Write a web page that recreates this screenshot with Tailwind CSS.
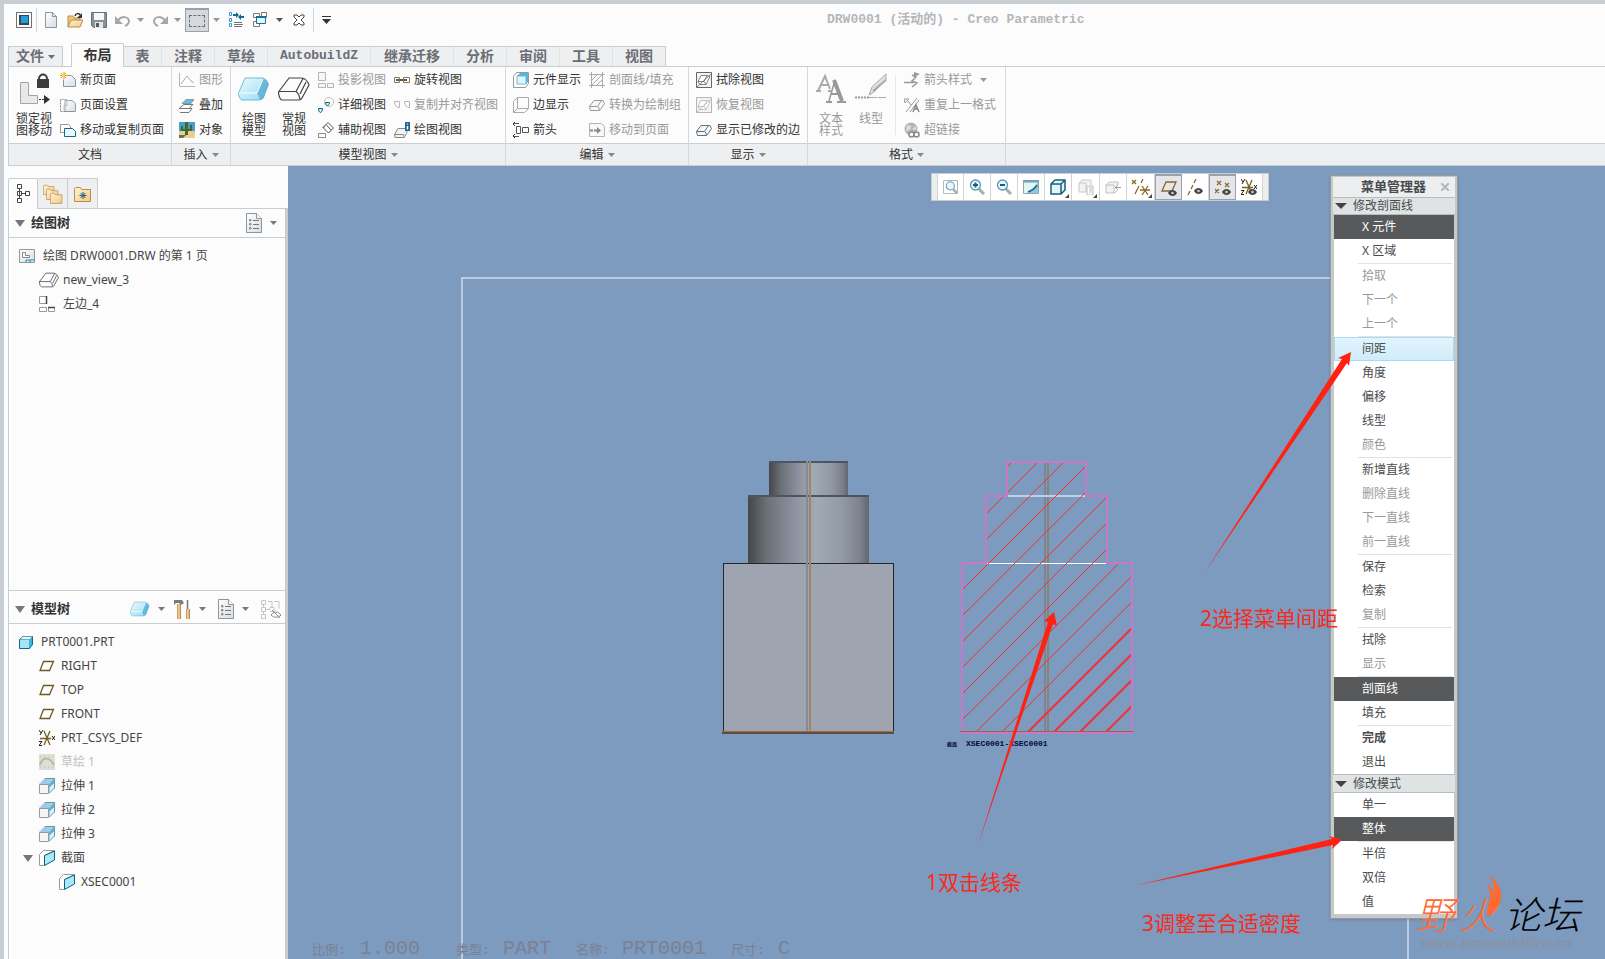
<!doctype html>
<html lang="zh-CN">

<head>
    <meta charset="UTF-8" />
    <meta name="viewport" content="width=device-width, initial-scale=1.0" />
    <title>DRW0001 (活动的) - Creo Parametric</title>
    <script src="https://cdn.jsdelivr.net/npm/@tailwindcss/browser@4"></script>
</head>

<body class="bg-[#fcfcfc] text-xs text-[#333] font-['Noto_Sans','Noto_Sans_CJK_SC',sans-serif]">

    <!-- icon library -->
    <svg class="absolute size-0">
        <defs>
            <linearGradient id="ice" x1="0" y1="0" x2="1" y2="1">
                <stop offset="0" stop-color="#effbfe" />
                <stop offset="1" stop-color="#8fdcf4" />
            </linearGradient>
            <linearGradient id="paper" x1="0" y1="0" x2="1" y2="1">
                <stop offset="0" stop-color="#fff" />
                <stop offset="1" stop-color="#d5dde4" />
            </linearGradient>
            <linearGradient id="gold" x1="0" y1="0" x2="1" y2="1">
                <stop offset="0" stop-color="#fff3d6" />
                <stop offset="1" stop-color="#f2c987" />
            </linearGradient>
            <linearGradient id="wood">
                <stop offset="0" stop-color="#c08a45" />
                <stop offset=".5" stop-color="#f7dcaa" />
                <stop offset="1" stop-color="#a87333" />
            </linearGradient>
            <linearGradient id="steel">
                <stop offset="0" stop-color="#44474b" />
                <stop offset=".15" stop-color="#6a7076" />
                <stop offset=".38" stop-color="#8d92a0" />
                <stop offset=".56" stop-color="#a0abb4" />
                <stop offset=".78" stop-color="#939aa5" />
                <stop offset=".93" stop-color="#7b808a" />
                <stop offset="1" stop-color="#62666d" />
            </linearGradient>
        </defs>
        <symbol id="caret" viewBox="0 0 7 4"><path d="M0 0h7L3.500 4z" fill="currentColor" /></symbol>
        <symbol id="page" viewBox="0 0 16 16"><path d="M2.500.5h7l4 4v11h-11z" fill="url(#paper)" stroke="#8e959b" /><path d="M9.500.5v4h4" fill="none" stroke="#8e959b" /></symbol>
        <symbol id="open" viewBox="0 0 16 16"><path d="M1 15V4h5l1 2h6v3" fill="#f0c680" stroke="#b98d45" /><path d="M1 15l3-7h12l-3 7z" fill="url(#gold)" stroke="#b98d45" /><path d="M8 4c1-3 4-3 5-1" fill="none" stroke="#333" stroke-width="1.500" /><path d="M15 1v5h-5z" fill="#333" /></symbol>
        <symbol id="save" viewBox="0 0 16 16"><path d="M.5.5h15v15h-13l-2-2z" fill="#8b9095" stroke="#6a7075" /><path d="M3 1h10v7H3z" fill="#f5f8fa" /><path d="M4 10h8v6H4z" fill="#e3e7ea" /><path d="M5 11h3v4H5z" fill="#555b60" /></symbol>
        <symbol id="undo" viewBox="0 0 16 16"><path d="M3 8c4-4 10-4 11 1 0 3-2 4-4 5" fill="none" stroke="#a3a7aa" stroke-width="2" /><path d="M0 4v8h8z" fill="#a3a7aa" /></symbol>
        <symbol id="tree" viewBox="0 0 16 20"><path d="M4.500 5v10M6 9.500h4M2.500.5h4v4h-4zM2.500 7.500h4v4h-4zM2.500 14.500h4v4h-4zM10.500 7.500h4v4h-4z" fill="#fff" stroke="#444" /></symbol>
        <symbol id="regen" viewBox="0 0 16 16"><path d="M1.500.5h2v3h-2zM1.500 6.500h2v3h-2zM1.500 11.500h2v3h-2z" fill="#fff" stroke="#2a9ad0" /><path d="M6 10.500h8M6 12.500h9M6 14.500h8" stroke="#70767a" /><path d="M6 4v-1h4M15 4v1h-4" fill="none" stroke="#136a8f" stroke-width="2" /><path d="M8 0l3 3-3 3zM13 2l-3 3 3 3z" fill="#136a8f" /></symbol>
        <symbol id="windows" viewBox="0 0 16 16"><path d="M1.500 1.500h6v4h-6zM1.500 9.500h6v5h-6zM9.500.5h5v5h-5z" fill="#fff" stroke="#777" /><path d="M4.500 4.500h9v7h-9z" fill="#e6f5fb" stroke="#167294" /><path d="M4 5h10" stroke="#167294" stroke-width="2" /></symbol>
        <symbol id="newpage" viewBox="0 0 16 16"><path d="M5.500 3.500h6l4 4v7h-12v-7" fill="url(#paper)" stroke="#8e959b" /><path d="M4 0v7M0 3.500h8M1 1l5 5M6 1L1 6" stroke="#f29a1f" /><circle cx="3.500" cy="3.500" r="1.500" fill="#ffd65a" /></symbol>
        <symbol id="setup" viewBox="0 0 16 16"><path d="M5 3.500h7l3.500 3v8H5z" fill="url(#paper)" stroke="#9aa0a5" /><path d="M.5 2.500v12h15" fill="none" stroke="#888" stroke-dasharray="2 1" /><path d="M1 2.500h6v6H4v5" fill="none" stroke="#b9bec2" /></symbol>
        <symbol id="copypage" viewBox="0 0 16 16"><path d="M.5 2.500h8l2 2v6H.5z" fill="#fff" stroke="#999" /><path d="M4.500 6.500h8l3 3v5h-11z" fill="#eaf7fc" stroke="#14678a" /></symbol>
        <symbol id="graph" viewBox="0 0 16 16"><path d="M.5 1v13.500H16" fill="none" stroke="#b5b8ba" /><path d="M2 12l6-8 4 5 3 2" fill="none" stroke="#aaa" /></symbol>
        <symbol id="overlay" viewBox="0 0 16 16"><path d="M1 15.500h9l3-4H5M0 11.500h10l4-4H5z" fill="#fff" stroke="#777" /><path d="M3 6.500h9l3-4H7z" fill="#5fc1e8" stroke="#8a9aa0" /></symbol>
        <symbol id="object" viewBox="0 0 16 16"><path d="M0 0h16v16H0z" fill="#4b9ccc" /><path d="M0 9h16v7H0z" fill="#ebcd92" /><path d="M6 0h3v13H6zM2 4h2v3h4v2H2zM11 3h2v6H8V7h3z" fill="#3c6b30" /><path d="M0 13h7l-3 3H0z" fill="#6d6d46" /></symbol>
        <symbol id="slab" viewBox="0 0 32 24"><path d="M7 1h18q3 1 5 5l-5 15q-2 2-4 2H4q-3-1-3.500-7z" fill="url(#ice)" stroke="#74bad4" /><path d="M25 1.500q4 1 6 6l-5 13q-2 2-4 2.500-1-4-3-7z" fill="#59acd0" opacity=".8" /><path d="M1 16h18l6-14" fill="none" stroke="#fff" /></symbol>
        <symbol id="wire" viewBox="0 0 32 24"><path d="M11 1h13q5 1 7 7l-7 13q-1 2-3 2H4q-3-1-3.500-8zM.5 14.500H18q3 2 4 8M18 14.500L25 1.500M22 17L28 5" fill="none" stroke="#444" stroke-width="1.200" /></symbol>
        <symbol id="proj" viewBox="0 0 16 16"><path d="M.5.500h7v8h-7zM.5 11.500h7v4h-7zM9.500 11.500h6v4h-6z" fill="#f7f7f7" stroke="#b5b5b5" /></symbol>
        <symbol id="projdark" viewBox="0 0 16 16"><path d="M.5.500h7v7h-7zM.5 11.500h7v4h-7zM9.500 11.500h6v4h-6z" fill="#fff" stroke="#999" /><path d="M7.500 0v8M9 11.500h7" stroke="#444" stroke-width="1.500" /></symbol>
        <symbol id="detail" viewBox="0 0 16 16"><circle cx="11" cy="5" r="4.500" fill="#fff" stroke="#bbb" /><path d="M7.500 5.500h4c0 2-1 3-2 3s-2-1-2-3zM.5 11.500h4c0 2-1 4-2 4s-2-2-2-4z" fill="#d5f0fa" stroke="#14607f" /></symbol>
        <symbol id="aux" viewBox="0 0 16 16"><path d="M10 .5l5.500 5.500-5 5L5 5.500zM8 2.500l5 5.500M5 5.500l2-1" fill="#fff" stroke="#555" /><path d="M.5 11.500h7v4h-7z" fill="#fff" stroke="#888" /></symbol>
        <symbol id="revolved" viewBox="0 0 16 16"><path d="M.5 5.500h5v5h-5zM9.500 5.500h6v5h-6z" fill="#fff" stroke="#777" /><path d="M2 8h12" stroke="#6f5620" stroke-width="2" stroke-dasharray="3 1" /></symbol>
        <symbol id="align" viewBox="0 0 16 16"><path d="M.5 4.500h5v6c-3 0-5-2-5-6zM10.500 4.500h5v6c-3 0-5-2-5-6z" fill="#fff" stroke="#b5b5b5" /></symbol>
        <symbol id="info" viewBox="0 0 16 16"><path d="M4 6.500h8l1 4-3 5H1l-.5-3zM.5 12.500h9l1 3" fill="#f3f3f3" stroke="#888" /><path d="M11 0h5v9h-5z" fill="#14678a" /><path d="M13.500 1.500v1M13.500 4v3.500" stroke="#fff" stroke-width="1.500" /></symbol>
        <symbol id="comp" viewBox="0 0 16 16"><path d="M.5 4.500l3-4h12v11l-3 4H.5z" fill="#fff" stroke="#999" /><path d="M4 4h9v8H4z" fill="#e2f5fc" stroke="#6cbcdc" /><path d="M4 4l3-3h8l-2 3zM13 4l2-3v9l-2 2z" fill="#58b5da" /></symbol>
        <symbol id="edge" viewBox="0 0 16 16"><path d="M.5 4.500l4-4h11v11l-4 4H.5zM4.500.5v11h11M4.500 11.500l-4 4" fill="none" stroke="#aaa" /></symbol>
        <symbol id="arrows" viewBox="0 0 16 16"><path d="M3.500 4.500h4v7h-4zM9.500 5.500h6v5h-6zM0 1.500h6M0 14.500h6" fill="none" stroke="#555" /><path d="M2 0L0 2l2 2M2 12l-2 2 2 2" fill="none" stroke="#333" /></symbol>
        <symbol id="hatch" viewBox="0 0 16 16"><path d="M2.500 0v16M13.500 0v16M0 2.500h16M0 13.500h16M3 8l5-5M3 13L13 3M8 13l5-5" fill="none" stroke="#aaa" /></symbol>
        <symbol id="draft" viewBox="0 0 16 16"><path d="M5 3.500h9l1.500 3-4 6-1 1H1.500l-1-4zM.5 9.500h8q2 1 2 4M8.500 9.500l4-6" fill="#f8f8f8" stroke="currentColor" /></symbol>
        <symbol id="move" viewBox="0 0 16 16"><path d="M.5 1.500h12l3 3v10H.5z" fill="#f8f8f8" stroke="#b5b5b5" /><path d="M1 8.500h9" stroke="#888" stroke-width="2" stroke-dasharray="3 1" /><path d="M8 5l4 3.500L8 12z" fill="#888" /></symbol>
        <symbol id="erase" viewBox="0 0 16 16"><path d="M.5.500h15v15H.5z" fill="#f4f4f4" stroke="currentColor" /><path d="M5 3.500h6l3 1-4 8H4l-2-3zM2 9.500h6l2 3M8 9.500l3-6M1 15L15 2" fill="#fff" stroke="currentColor" stroke-width=".8" /></symbol>
        <symbol id="arrowstyle" viewBox="0 0 16 16"><path d="M0 10.500h10M8 3l4 2-4 4 5 2-5 4" fill="none" stroke="#999" stroke-width="1.500" /><path d="M10 0l6 2-6 3z" fill="#999" /></symbol>
        <symbol id="repeat" viewBox="0 0 16 16"><path d="M0 2h5l-4 4zM3 3l4 5M2 15L13 1M6 15L15 3" fill="none" stroke="#999" /><path d="M9 15l3-7 3 7M10 12h4" fill="none" stroke="#888" stroke-width="1.500" /></symbol>
        <symbol id="link" viewBox="0 0 16 16"><circle cx="7" cy="7" r="6.500" fill="#b5b5b5" /><path d="M3 3l4 1-1 4-4 1zM8 7l4-3v4z" fill="#ddd" /><circle cx="7.500" cy="12.500" r="2.500" fill="#fff" stroke="#888" stroke-width="1.500" /><circle cx="12.500" cy="12.500" r="2.500" fill="#fff" stroke="#888" stroke-width="1.500" /></symbol>
        <symbol id="folder" viewBox="0 0 18 16"><path d="M.5 15.500v-13l1-1h5l1 2h9v12z" fill="url(#gold)" stroke="#b98d45" /></symbol>
        <symbol id="list" viewBox="0 0 16 20"><path d="M.5.500h10l5 5v14H.5z" fill="url(#paper)" stroke="#8d949a" /><path d="M10.500.5v5h5" fill="#fff" stroke="#8d949a" /><path d="M7 7.500h6M7 11.500h6M7 15.500h6" stroke="#777" /><path d="M3.500 6.500h1.500v1.500H3.500zM3.500 10.500h1.500v1.500H3.500zM3.500 14.500h1.500v1.500H3.500z" fill="none" stroke="#888" /></symbol>
        <symbol id="sheet" viewBox="0 0 16 14"><path d="M.5.500h15v13H.5z" fill="url(#paper)" stroke="#92999e" /><path d="M3.500 3.500h3v3h4v2h-7z" fill="#fff" stroke="#888" /><path d="M7 13v-2h9M11 11v3" fill="none" stroke="#2a8fbd" /></symbol>
        <symbol id="part" viewBox="0 0 14 13"><path d="M.5 3.500l3-3h10v8l-3 4H.5z" fill="#3fb3df" stroke="#14678a" /><path d="M1 4h9v8H1z" fill="#a6e3f8" /><path d="M1 3.500h9.500l3-3h-10z" fill="#e8f9fe" stroke="#3a8aa8" stroke-width=".5" /></symbol>
        <symbol id="plane" viewBox="0 0 16 12"><path d="M4.500 1.500h10l-4 9H1z" fill="none" stroke="#6f5820" stroke-width="1.300" /></symbol>
        <symbol id="csys" viewBox="0 0 16 16"><path d="M1 8.500h11M5 1l6 14M11 1L5 15" stroke="#7a5c20" stroke-width="1.300" /><path d="M0 0l2 3M4 0L1 5M0 11.500h3l-3 4h3M13 6l3 4M16 6l-3 4" fill="none" stroke="#222" /></symbol>
        <symbol id="sketch" viewBox="0 0 16 16"><path d="M0 0h16v16H0z" fill="#deded8" /><path d="M1 3h14M1 13h14" stroke="#b9ba9c" stroke-dasharray="1 3" /><path d="M1 11c3-9 10-8 14 0" fill="none" stroke="#b7b896" stroke-width="2" /></symbol>
        <symbol id="extrude" viewBox="0 0 16 16"><path d="M0 6l6-6h10l-6 6z" fill="#9dcce2" /><path d="M10 6l6-6v9l-6 6z" fill="#62a9cb" /><path d="M10.500 14.500V9l5-4v5z" fill="#d8f3fb" /><path d="M15.500 1v9l-5 5M6 .5h10" fill="none" stroke="#5f99b3" /><path d="M.5 6.500h9v9h-9z" fill="#f5f5f5" stroke="#999" /></symbol>
        <symbol id="xsec" viewBox="0 0 16 16"><path d="M.5 4.500l4-4h11l-10 5v10h-5z" fill="#fff" stroke="#999" /><path d="M5.500 5.500l10-4.500v9l-10 5.500z" fill="#a9e7fb" stroke="#14607f" /></symbol>
        <symbol id="eye" viewBox="0 0 9 6"><path d="M0 3c2-4 7-4 9 0-2 4-7 4-9 0z" fill="#444" /><circle cx="4.500" cy="3" r="1.300" fill="#ccc" /></symbol>
        <symbol id="lens" viewBox="0 0 16 16"><path d="M10 10l5 5" stroke="#aaa" stroke-width="3" /><circle cx="6.500" cy="6" r="5" fill="#eaf7fc" stroke="#5a9ab5" stroke-width="1.300" /></symbol>
    </svg>

    <div class="flex min-h-screen flex-col border-l-4 border-t-4 border-[#c8cdd2]">

        <!-- quick access bar -->
        <header class="relative flex h-[38px] items-center pl-3 pb-1.5 text-[#999]">
            <div class="flex items-center">
                <button class="mr-1 flex size-4 items-center justify-center border border-gray-500" aria-label="窗口"><span class="size-2.5 border border-b-2 border-l-2 border-[#444] bg-[#1ba0e2]"></span></button>
                <span class="mr-1.5 h-6 w-px bg-gray-300"></span>
                <button aria-label="新建"><svg class="size-4"><use href="#page" /></svg></button>
                <button class="ml-2" aria-label="打开"><svg class="size-4"><use href="#open" /></svg></button>
                <button class="ml-2" aria-label="保存"><svg class="size-4"><use href="#save" /></svg></button>
                <button class="ml-2 flex items-center gap-1.5" aria-label="撤消"><svg class="size-4"><use href="#undo" /></svg><svg class="h-1 w-[7px]"><use href="#caret" /></svg></button>
                <button class="ml-2 flex items-center gap-1.5" aria-label="重做"><svg class="size-4 -scale-x-100"><use href="#undo" /></svg><svg class="h-1 w-[7px]"><use href="#caret" /></svg></button>
                <button class="ml-1 flex h-6 w-6 items-center justify-center border border-t-2 border-gray-400 bg-[#d6d9dc]" aria-label="选择"><span class="h-3 w-4 border border-dashed border-gray-500"></span></button>
                <svg class="ml-1 h-1 w-[7px]"><use href="#caret" /></svg>
                <button class="ml-2" aria-label="重新生成"><svg class="size-4"><use href="#regen" /></svg></button>
                <button class="ml-2 flex items-center gap-2" aria-label="窗口切换"><svg class="size-4"><use href="#windows" /></svg><svg class="h-1 w-[7px] text-[#555]"><use href="#caret" /></svg></button>
                <button class="ml-2.5" aria-label="关闭"><svg class="h-3 w-3" viewBox="0 0 12 12"><path d="M1 1h3l2 2 2-2h3v2L8 6l3 3v2H8L6 9l-2 2H1V9l3-3-3-3z" fill="#fff" stroke="#444" /></svg></button>
                <span class="ml-2 h-6 w-px bg-gray-300"></span>
                <button class="ml-2 text-[#333]" aria-label="自定义"><svg class="h-2 w-[9px]" viewBox="0 0 9 8"><path d="M0 0h9v1H0zM0 3h9L4.500 8z" fill="currentColor" /></svg></button>
            </div>
            <h1 class="absolute left-[823px] text-[13px] font-bold text-[#b4b7ba] font-['Liberation_Mono','Noto_Sans_CJK_SC',monospace]">DRW0001 (活动的) - Creo Parametric</h1>
        </header>

        <!-- ribbon tabs -->
        <nav class="flex h-6 items-end pl-1 text-sm font-bold text-[#6b6d75] font-['Liberation_Mono','Noto_Sans_CJK_SC',monospace]">
            <button class="mr-2 flex h-5 w-[55px] items-center justify-center gap-1 border border-b-0 border-[#c8cdd0] bg-[#eeeff1]">文件<svg class="h-1 w-[7px]"><use href="#caret" /></svg></button>
            <button class="relative z-10 -mb-px h-6 w-[53px] rounded-t-xs border border-b-0 border-[#c8cdd0] bg-[#fcfcfc] text-[#333]">布局</button>
            <button class="h-5 w-[38px] border-t border-r border-[#c8cdd0] border-r-[#dfe2e4] bg-[#eeeff1]">表</button>
            <button class="h-5 w-[53px] border-t border-r border-[#c8cdd0] border-r-[#dfe2e4] bg-[#eeeff1]">注释</button>
            <button class="h-5 w-[53px] border-t border-r border-[#c8cdd0] border-r-[#dfe2e4] bg-[#eeeff1]">草绘</button>
            <button class="h-5 w-[103px] border-t border-r border-[#c8cdd0] border-r-[#dfe2e4] bg-[#eeeff1] text-[13px]">AutobuildZ</button>
            <button class="h-5 w-[83px] border-t border-r border-[#c8cdd0] border-r-[#dfe2e4] bg-[#eeeff1]">继承迁移</button>
            <button class="h-5 w-[53px] border-t border-r border-[#c8cdd0] border-r-[#dfe2e4] bg-[#eeeff1]">分析</button>
            <button class="h-5 w-[53px] border-t border-r border-[#c8cdd0] border-r-[#dfe2e4] bg-[#eeeff1]">审阅</button>
            <button class="h-5 w-[53px] border-t border-r border-[#c8cdd0] border-r-[#dfe2e4] bg-[#eeeff1]">工具</button>
            <button class="h-5 w-[53px] border-t border-r border-[#c8cdd0] bg-[#eeeff1]">视图</button>
        </nav>

        <!-- ribbon -->
        <div class="ml-1 flex h-[100px] border-y border-l border-[#c8cdd0] whitespace-nowrap">
            <section class="flex w-[163px] flex-col border-r border-[#d5d9dc]">
                <div class="flex flex-1 gap-2 pl-[7px]">
                    <button class="flex w-9 flex-col items-center gap-2 pt-1.5 leading-3">
                        <svg class="size-8 shrink-0" viewBox="0 0 32 32"><path d="M2.500 9.500h8v13h9v8h-17z" fill="#e8e8e8" stroke="#a5a5a5" /><path d="M19 6h12v9H19z" fill="#3c3c3c" /><path d="M21 6c0-6 8-6 8 0" fill="none" stroke="#3c3c3c" stroke-width="2" /><path d="M21 26.500h7" stroke="#333" stroke-dasharray="2 1" /><path d="M26 22l6 4.500-6 4.500z" fill="#333" /></svg>
                        <span>锁定视<br>图移动</span>
                    </button>
                    <div>
                        <button class="flex h-[25px] items-center gap-1"><svg class="size-4"><use href="#newpage" /></svg>新页面</button>
                        <button class="flex h-[25px] items-center gap-1"><svg class="size-4"><use href="#setup" /></svg>页面设置</button>
                        <button class="flex h-[25px] items-center gap-1"><svg class="size-4"><use href="#copypage" /></svg>移动或复制页面</button>
                    </div>
                </div>
                <footer class="flex h-[22px] items-center justify-center border-t border-[#c8cdd0] bg-[#eeeff1]">文档</footer>
            </section>
            <section class="flex w-[59px] flex-col border-r border-[#d5d9dc]">
                <div class="flex-1 pl-[7px]">
                    <button class="flex h-[25px] items-center gap-1 text-[#999]"><svg class="size-4"><use href="#graph" /></svg>图形</button>
                    <button class="flex h-[25px] items-center gap-1"><svg class="size-4"><use href="#overlay" /></svg>叠加</button>
                    <button class="flex h-[25px] items-center gap-1"><svg class="size-4"><use href="#object" /></svg>对象</button>
                </div>
                <footer class="flex h-[22px] items-center justify-center gap-1 border-t border-[#c8cdd0] bg-[#eeeff1]">插入<svg class="h-1 w-[7px] text-[#888]"><use href="#caret" /></svg></footer>
            </section>
            <section class="flex w-[275px] flex-col border-r border-[#d5d9dc]">
                <div class="flex flex-1 gap-2 pl-[7px]">
                    <button class="flex w-8 flex-col items-center gap-2 pt-1.5 leading-3"><svg class="size-8 shrink-0"><use href="#slab" /></svg><span>绘图<br>模型</span></button>
                    <button class="flex w-8 flex-col items-center gap-2 pt-1.5 leading-3"><svg class="size-8 shrink-0"><use href="#wire" /></svg><span>常规<br>视图</span></button>
                    <div>
                        <button class="flex h-[25px] items-center gap-1 text-[#999]"><svg class="size-4"><use href="#proj" /></svg>投影视图</button>
                        <button class="flex h-[25px] items-center gap-1"><svg class="size-4"><use href="#detail" /></svg>详细视图</button>
                        <button class="flex h-[25px] items-center gap-1"><svg class="size-4"><use href="#aux" /></svg>辅助视图</button>
                    </div>
                    <div>
                        <button class="flex h-[25px] items-center gap-1"><svg class="size-4"><use href="#revolved" /></svg>旋转视图</button>
                        <button class="flex h-[25px] items-center gap-1 text-[#999]"><svg class="size-4"><use href="#align" /></svg>复制并对齐视图</button>
                        <button class="flex h-[25px] items-center gap-1"><svg class="size-4"><use href="#info" /></svg>绘图视图</button>
                    </div>
                </div>
                <footer class="flex h-[22px] items-center justify-center gap-1 border-t border-[#c8cdd0] bg-[#eeeff1]">模型视图<svg class="h-1 w-[7px] text-[#888]"><use href="#caret" /></svg></footer>
            </section>
            <section class="flex w-[183px] flex-col border-r border-[#d5d9dc]">
                <div class="flex flex-1 gap-2 pl-[7px]">
                    <div>
                        <button class="flex h-[25px] items-center gap-1"><svg class="size-4"><use href="#comp" /></svg>元件显示</button>
                        <button class="flex h-[25px] items-center gap-1"><svg class="size-4"><use href="#edge" /></svg>边显示</button>
                        <button class="flex h-[25px] items-center gap-1"><svg class="size-4"><use href="#arrows" /></svg>箭头</button>
                    </div>
                    <div class="text-[#999]">
                        <button class="flex h-[25px] items-center gap-1"><svg class="size-4"><use href="#hatch" /></svg>剖面线/填充</button>
                        <button class="flex h-[25px] items-center gap-1"><svg class="size-4"><use href="#draft" /></svg>转换为绘制组</button>
                        <button class="flex h-[25px] items-center gap-1"><svg class="size-4"><use href="#move" /></svg>移动到页面</button>
                    </div>
                </div>
                <footer class="flex h-[22px] items-center justify-center gap-1 border-t border-[#c8cdd0] bg-[#eeeff1]">编辑<svg class="h-1 w-[7px] text-[#888]"><use href="#caret" /></svg></footer>
            </section>
            <section class="flex w-[119px] flex-col border-r border-[#d5d9dc]">
                <div class="flex-1 pl-[7px]">
                    <button class="flex h-[25px] items-center gap-1"><svg class="size-4 text-[#666]"><use href="#erase" /></svg>拭除视图</button>
                    <button class="flex h-[25px] items-center gap-1 text-[#999]"><svg class="size-4 text-[#b5b5b5]"><use href="#erase" /></svg>恢复视图</button>
                    <button class="flex h-[25px] items-center gap-1"><svg class="size-4 text-[#57737d]"><use href="#draft" /></svg>显示已修改的边</button>
                </div>
                <footer class="flex h-[22px] items-center justify-center gap-1 border-t border-[#c8cdd0] bg-[#eeeff1]">显示<svg class="h-1 w-[7px] text-[#888]"><use href="#caret" /></svg></footer>
            </section>
            <section class="flex w-[198px] flex-col border-r border-[#d5d9dc] text-[#999]">
                <div class="flex flex-1 gap-2 pl-[7px]">
                    <button class="flex w-8 flex-col items-center gap-2 pt-1.5 leading-3">
                        <svg class="size-8 shrink-0" viewBox="0 0 32 32"><path d="M3 18L10 3l5 13M6 12h8M1 18h5M13 18h3" fill="none" stroke="#aaa" stroke-width="2" /><path d="M14 28L20 7" stroke="#999" stroke-width="1.500" /><path d="M19 7l8 21" stroke="#999" stroke-width="4" /><path d="M16 21h9M11 29h6M22 29h9" fill="none" stroke="#999" stroke-width="2" /></svg>
                        <span>文本<br>样式</span>
                    </button>
                    <button class="flex w-8 flex-col items-center gap-2 pt-1.5 leading-3">
                        <svg class="size-8 shrink-0" viewBox="0 0 32 32"><path d="M14 22l3-8L31 1v6L19 19z" fill="#e2e2e2" stroke="#aaa" /><path d="M18 18L31 7" stroke="#aaa" stroke-width="2" /><path d="M0 24.500h14" stroke="#999" stroke-width="2" stroke-dasharray="2 1" /><path d="M14 24.500h18" stroke="#aaa" stroke-dasharray="8 1" /></svg>
                        <span>线型</span>
                    </button>
                    <span class="my-2 w-px bg-gray-200"></span>
                    <div>
                        <button class="flex h-[25px] items-center gap-1"><svg class="size-4"><use href="#arrowstyle" /></svg>箭头样式<svg class="ml-1 h-1 w-[7px]"><use href="#caret" /></svg></button>
                        <button class="flex h-[25px] items-center gap-1"><svg class="size-4"><use href="#repeat" /></svg>重复上一格式</button>
                        <button class="flex h-[25px] items-center gap-1"><svg class="size-4"><use href="#link" /></svg>超链接</button>
                    </div>
                </div>
                <footer class="flex h-[22px] items-center justify-center gap-1 border-t border-[#c8cdd0] bg-[#eeeff1] text-[#333]">格式<svg class="h-1 w-[7px] text-[#888]"><use href="#caret" /></svg></footer>
            </section>
            <div class="flex flex-1 flex-col">
                <div class="flex-1"></div>
                <div class="h-[22px] border-t border-[#c8cdd0] bg-[#eeeff1]"></div>
            </div>
        </div>

        <div class="flex flex-1">
            <!-- navigator -->
            <aside class="flex w-[284px] shrink-0 flex-col pt-3 pl-1">
                <div class="flex h-[31px] border-b border-[#c8cdd0]">
                    <button class="-mb-px flex h-[31px] w-[30px] items-center justify-center rounded-t-xs border border-b-0 border-[#c8cdd0] bg-[#fcfcfc]" aria-label="模型树"><svg class="h-5 w-4"><use href="#tree" /></svg></button>
                    <button class="flex w-[30px] items-center justify-center border-t border-r border-[#c8cdd0] bg-[#eeeff1]" aria-label="文件夹"><svg class="h-5 w-5" viewBox="0 0 20 20"><use href="#folder" x="0" y="0" width="12" height="11" /><use href="#folder" x="3" y="4" width="13" height="12" /><use href="#folder" x="7" y="8" width="13" height="12" /></svg></button>
                    <button class="flex w-[30px] items-center justify-center border-t border-r border-[#c8cdd0] bg-[#eeeff1]" aria-label="收藏夹"><svg class="h-4 w-[18px]" viewBox="0 0 18 16"><use href="#folder" width="18" height="16" /><path d="M9 6v7M5.500 9.500h7M6.500 7l5 5M11.500 7l-5 5" stroke="#14607f" /></svg></button>
                </div>
                <div class="flex flex-1 flex-col border-r-[3px] border-l border-[#c8cdd0]">
                    <div class="flex h-[29px] items-center border-b border-[#c8cdd0] pr-1 pl-1.5">
                        <svg class="h-[7px] w-2.5 text-[#777]" viewBox="0 0 10 7"><path d="M0 0h10L5 7z" fill="currentColor" /></svg>
                        <h2 class="ml-1.5 text-[13px] font-bold">绘图树</h2>
                        <svg class="ml-auto h-5 w-4"><use href="#list" /></svg>
                        <svg class="mr-1 ml-2 h-1 w-[7px] text-[#777]"><use href="#caret" /></svg>
                    </div>
                    <ul class="h-[352px] pt-1.5 text-[#444]">
                        <li class="flex h-6 items-center gap-2 pl-2.5"><svg class="h-3.5 w-4"><use href="#sheet" /></svg>绘图 DRW0001.DRW 的第 1 页</li>
                        <li class="flex h-6 items-center gap-1 pl-[30px]"><svg class="h-4 w-5"><use href="#wire" /></svg>new_view_3</li>
                        <li class="flex h-6 items-center gap-2 pl-[30px]"><svg class="size-4"><use href="#projdark" /></svg>左边_4</li>
                    </ul>
                    <div class="flex h-[34px] items-center border-y border-[#c8cdd0] pt-1 pr-1 pl-1.5 text-[#777]">
                        <svg class="h-[7px] w-2.5" viewBox="0 0 10 7"><path d="M0 0h10L5 7z" fill="currentColor" /></svg>
                        <h2 class="ml-1.5 text-[13px] font-bold text-[#333]">模型树</h2>
                        <svg class="ml-auto h-4 w-5"><use href="#slab" /></svg>
                        <svg class="ml-2 h-1 w-[7px]"><use href="#caret" /></svg>
                        <svg class="ml-2 h-5 w-[18px]" viewBox="0 0 18 20"><path d="M1 1h8l2 3-3 2-2-2H3L1 6z" fill="#777c82" /><path d="M4 5h4v15H4z" fill="url(#wood)" /><path d="M14.500 1v10" stroke="#777" stroke-width="1.500" /><path d="M13 10h4v10h-4z" fill="url(#wood)" /></svg>
                        <svg class="ml-2 h-1 w-[7px]"><use href="#caret" /></svg>
                        <svg class="ml-3 h-5 w-4"><use href="#list" /></svg>
                        <svg class="ml-2 h-1 w-[7px]"><use href="#caret" /></svg>
                        <svg class="ml-3 h-5 w-5" viewBox="0 0 20 20"><path d="M.5 1.500h4v4h-4zM.5 8.500h4v4h-4zM.5 15.500h4v4h-4zM2.500 5.500v3M2.500 12.500v3M5 10.500h4v-2h4v4H9M7 2.500h4v6M13 2.500h5v7" fill="none" stroke="#c5c5c5" /><path d="M10 16c3-4 7-4 10 0-3 3-7 3-10 0zM11 11l8 8" fill="none" stroke="#888" /></svg>
                    </div>
                    <ul class="pt-1.5 text-[#444]">
                        <li class="flex h-6 items-center gap-2 pl-2.5"><svg class="h-[13px] w-3.5"><use href="#part" /></svg>PRT0001.PRT</li>
                        <li class="flex h-6 items-center gap-1.5 pl-[30px]"><svg class="h-3 w-4"><use href="#plane" /></svg>RIGHT</li>
                        <li class="flex h-6 items-center gap-1.5 pl-[30px]"><svg class="h-3 w-4"><use href="#plane" /></svg>TOP</li>
                        <li class="flex h-6 items-center gap-1.5 pl-[30px]"><svg class="h-3 w-4"><use href="#plane" /></svg>FRONT</li>
                        <li class="flex h-6 items-center gap-1.5 pl-[30px]"><svg class="size-4"><use href="#csys" /></svg>PRT_CSYS_DEF</li>
                        <li class="flex h-6 items-center gap-1.5 pl-[30px] text-[#c0c0c0]"><svg class="size-4"><use href="#sketch" /></svg>草绘 1</li>
                        <li class="flex h-6 items-center gap-1.5 pl-[30px]"><svg class="size-4"><use href="#extrude" /></svg>拉伸 1</li>
                        <li class="flex h-6 items-center gap-1.5 pl-[30px]"><svg class="size-4"><use href="#extrude" /></svg>拉伸 2</li>
                        <li class="flex h-6 items-center gap-1.5 pl-[30px]"><svg class="size-4"><use href="#extrude" /></svg>拉伸 3</li>
                        <li class="flex h-6 items-center gap-1.5 pl-3.5"><svg class="h-[7px] w-2.5 text-[#777]" viewBox="0 0 10 7"><path d="M0 0h10L5 7z" fill="currentColor" /></svg><svg class="size-4"><use href="#xsec" /></svg>截面</li>
                        <li class="flex h-6 items-center gap-1.5 pl-[50px]"><svg class="size-4"><use href="#xsec" /></svg>XSEC0001</li>
                    </ul>
                </div>
            </aside>

            <!-- drawing canvas -->
            <main class="relative flex-1 overflow-hidden bg-[#7d9abf]">
                <svg class="absolute inset-0 h-full w-full">
                    <defs>
                        <clipPath id="section"><path d="M1007 462h80v34h20v67h25v170H962V563h24v-67h21z" /></clipPath>
                    </defs>
                    <g transform="translate(-288 -166)">
                        <path d="M462 960V278h946v682" fill="none" stroke="#bccbe0" stroke-width="2" />

                        <!-- shaded view -->
                        <rect x="769" y="462" width="79" height="34" fill="url(#steel)" />
                        <path d="M769 462h79" stroke="#4f555f" stroke-width="2" />
                        <rect x="748" y="496" width="121" height="67" fill="url(#steel)" />
                        <path d="M748 496h121" stroke="#4f555f" stroke-width="2" />
                        <rect x="723.5" y="563.5" width="170" height="170" fill="#9ea4b0" stroke="#22262c" />
                        <path d="M807 461v273" stroke="#858b95" stroke-width="2" />
                        <path d="M810 461v273" stroke="#a38468" stroke-width="2" />
                        <path d="M722 731.500h172" stroke="#a06c3c" />
                        <path d="M722 733h172" stroke="#5d4d48" stroke-width="2" />

                        <!-- section view -->
                        <path d="M1045 461v273" stroke="#7b8494" stroke-width="2" />
                        <path d="M1048 461v273" stroke="#8d8175" stroke-width="2" />
                        <path d="M1007 496h80" stroke="#bed0e2" stroke-width="2" />
                        <path d="M986 563.500h121" stroke="#fff" />
                        <g id="hatching" clip-path="url(#section)" stroke="#f23038"></g>
                        <path d="M1007 462h79v34h21v67h25v170H962V563h24v-67h21z" fill="none" stroke="#c878c8" stroke-width="2" />
                        <path d="M960 731.500h173" stroke="#8f6848" />
                        <text x="947" y="746" font-size="5" font-weight="bold" fill="#08083c">截面</text>
                        <text x="966" y="746" font-size="8" font-weight="bold" fill="#08083c" class="font-['Liberation_Mono',monospace]">XSEC0001-XSEC0001</text>

                        <g fill="#7b8191" class="font-['Liberation_Mono','Noto_Sans_CJK_SC',monospace]">
                            <g font-size="13">
                                <text x="312" y="954">比例:</text>
                                <text x="456" y="954">类型:</text>
                                <text x="576" y="954">名称:</text>
                                <text x="731" y="954">尺寸:</text>
                            </g>
                            <g font-size="20">
                                <text x="360" y="954">1.000</text>
                                <text x="503" y="954">PART</text>
                                <text x="622" y="954">PRT0001</text>
                                <text x="778" y="954">C</text>
                            </g>
                        </g>
                    </g>
                </svg>

                <div class="absolute top-[7px] left-[643px] flex h-7 border border-[#c8cdd2] bg-[#eceef0] px-[5px]">
                    <button class="flex w-[27px] items-center justify-center border-x border-[#d2d5d8] bg-white" aria-label="重新调整"><svg class="size-4" viewBox="0 0 16 16"><path d="M.5 2v12.500h14V1.500H.5" fill="none" stroke="#b5b8ba" /><use href="#lens" x="2" y="2" width="13" height="13" /></svg></button>
                    <button class="flex w-[27px] items-center justify-center border-r border-[#d2d5d8] bg-white" aria-label="放大"><svg class="size-4" viewBox="0 0 16 16"><use href="#lens" width="16" height="16" /><path d="M4 6h5M6.500 3.500v5" stroke="#14607f" stroke-width="2" /></svg></button>
                    <button class="flex w-[27px] items-center justify-center border-r border-[#d2d5d8] bg-white" aria-label="缩小"><svg class="size-4" viewBox="0 0 16 16"><use href="#lens" width="16" height="16" /><path d="M4 6h5" stroke="#14607f" stroke-width="2" /></svg></button>
                    <button class="flex w-[27px] items-center justify-center border-r border-[#d2d5d8] bg-white" aria-label="重画"><svg class="size-4" viewBox="0 0 16 16"><path d="M.5 1.500h15v13H.5z" fill="#8fcbe0" stroke="#8fa7b0" /><path d="M1 4h13c-1 5-6 8-10 10H1z" fill="#e4f4f9" /><path d="M0 2h16" stroke="#74848c" /><path d="M5 13c3-1 7-4 9-7" fill="none" stroke="#14607f" stroke-width="1.500" /></svg></button>
                    <button class="relative flex w-[27px] items-center justify-center border-r border-[#d2d5d8] bg-white" aria-label="显示样式"><svg class="size-4" viewBox="0 0 16 16"><path d="M1 5l4-4h10v10l-4 4H1zM1 5h10v10M11 5l4-4" fill="#e3f4fa" stroke="#14607f" stroke-width="1.500" /></svg><span class="absolute right-0.5 bottom-0.5 border-2 border-transparent border-r-[#444] border-b-[#444]"></span></button>
                    <button class="relative flex w-[28px] items-center justify-center border-r border-[#d2d5d8] bg-white" aria-label="已保存方向"><svg class="size-4" viewBox="0 0 16 16"><path d="M1 4l3-3h9v5M1 4h7v9H1z" fill="#f2f2f2" stroke="#c8c8c8" /><path d="M9 7h6v9H9zM11 9h3M11 11h3M11 13h3" fill="#fff" stroke="#bbb" /></svg><span class="absolute right-0.5 bottom-0.5 border-2 border-transparent border-r-[#444] border-b-[#444]"></span></button>
                    <button class="flex w-[27px] items-center justify-center border-r border-[#d2d5d8] bg-white" aria-label="视图管理器"><svg class="size-4" viewBox="0 0 16 16"><path d="M1 6l3-3h9v3M1 6h8v8H1zM9 14l3-2" fill="#f2f2f2" stroke="#c0c0c0" /><path d="M10 8.500h6M13 6l-3 2.500 3 2.500" fill="none" stroke="#999" /></svg></button>
                    <button class="relative flex w-[28px] items-center justify-center border-r border-[#d2d5d8] bg-white" aria-label="基准显示"><svg class="size-4 overflow-visible" viewBox="0 0 16 16"><path d="M-1 1l4 4M3 1l-4 4M10 0L8 4M6 7L2 15M7 11h10M9 7l6 9M15 7L9 16" stroke="#8a6826" stroke-width="1.300" /></svg><span class="absolute right-0.5 bottom-0.5 border-2 border-transparent border-r-[#444] border-b-[#444]"></span></button>
                    <button class="flex w-[27px] items-center justify-center border border-t-2 border-gray-400 bg-[#e4e6e9]" aria-label="平面显示"><svg class="size-4 overflow-visible" viewBox="0 0 16 16"><path d="M5 2h10l-4 9H1z" fill="none" stroke="#8a6826" stroke-width="1.300" /><use href="#eye" x="7" y="10" width="9" height="6" /></svg></button>
                    <button class="flex w-[27px] items-center justify-center border-r border-[#d2d5d8] bg-white" aria-label="轴显示"><svg class="size-4" viewBox="0 0 16 16"><path d="M9 0L7 4M6 6L4 10M3 12l-2 4" stroke="#8a6826" stroke-width="1.300" /><use href="#eye" x="7" y="9" width="9" height="6" /></svg></button>
                    <button class="flex w-[27px] items-center justify-center border border-t-2 border-gray-400 bg-[#e4e6e9]" aria-label="点显示"><svg class="size-4" viewBox="0 0 16 16"><path d="M2 1l4 4M6 1L2 5M10 3l4 4M14 3l-4 4M0 9l4 4M4 9l-4 4" stroke="#8a6826" stroke-width="1.300" /><use href="#eye" x="7" y="9" width="9" height="6" /></svg></button>
                    <button class="flex w-[27px] items-center justify-center border-r border-[#d2d5d8] bg-white" aria-label="坐标系显示"><svg class="size-4" viewBox="0 0 16 16"><use href="#csys" width="16" height="16" /><use href="#eye" x="7" y="10" width="9" height="6" /></svg></button>
                </div>

                <!-- menu manager -->
                <div class="absolute top-[9px] left-[1042px] w-32 border border-[#999] bg-[#c6c9cb] px-[2px] pt-px pb-1 shadow-sm text-[#4a4b4d]">
                    <div class="flex h-5 items-center bg-[#eceeef] pl-7 text-[13px] font-bold">菜单管理器<button class="ml-auto pr-1.5 text-[#b5b5b5]" aria-label="关闭"><svg class="size-2" viewBox="0 0 8 8"><path d="M0 0l8 8M8 0L0 8" stroke="currentColor" stroke-width="2" /></svg></button></div>
                    <div class="flex h-[18px] items-center gap-1.5 border-t border-b border-[#b9bcbe] bg-[#dfe3e4] pl-0.5"><svg class="h-1.5 w-3 text-[#444]" viewBox="0 0 12 6"><path d="M0 0h12L6 6z" fill="currentColor" /></svg>修改剖面线</div>
                    <div class="mx-px flex flex-col bg-white">
                        <button class="h-6 bg-[#58595b] pl-7 text-left text-white">X 元件</button>
                        <button class="h-6 pl-7 text-left">X 区域</button>
                        <hr class="mr-0.5 ml-6 border-[#e2e2e2]">
                        <button class="h-6 pl-7 text-left text-[#999]">拾取</button>
                        <button class="h-6 pl-7 text-left text-[#999]">下一个</button>
                        <button class="h-6 pl-7 text-left text-[#999]">上一个</button>
                        <hr class="mr-0.5 ml-6 border-[#e2e2e2]">
                        <button class="h-6 border border-[#a5dcf3] bg-linear-to-b from-[#e2f4fd] to-[#d0ecfa] pl-[27px] text-left">间距</button>
                        <button class="h-6 pl-7 text-left">角度</button>
                        <button class="h-6 pl-7 text-left">偏移</button>
                        <button class="h-6 pl-7 text-left">线型</button>
                        <button class="h-6 pl-7 text-left text-[#999]">颜色</button>
                        <hr class="mr-0.5 ml-6 border-[#e2e2e2]">
                        <button class="h-6 pl-7 text-left">新增直线</button>
                        <button class="h-6 pl-7 text-left text-[#999]">删除直线</button>
                        <button class="h-6 pl-7 text-left text-[#999]">下一直线</button>
                        <button class="h-6 pl-7 text-left text-[#999]">前一直线</button>
                        <hr class="mr-0.5 ml-6 border-[#e2e2e2]">
                        <button class="h-6 pl-7 text-left">保存</button>
                        <button class="h-6 pl-7 text-left">检索</button>
                        <button class="h-6 pl-7 text-left text-[#999]">复制</button>
                        <hr class="mr-0.5 ml-6 border-[#e2e2e2]">
                        <button class="h-6 pl-7 text-left">拭除</button>
                        <button class="h-6 pl-7 text-left text-[#999]">显示</button>
                        <hr class="mr-0.5 ml-6 border-[#e2e2e2]">
                        <button class="h-6 bg-[#58595b] pl-7 text-left text-white">剖面线</button>
                        <button class="h-6 pl-7 text-left">填充</button>
                        <hr class="mr-0.5 ml-6 border-[#e2e2e2]">
                        <button class="h-6 pl-7 text-left font-bold">完成</button>
                        <button class="h-6 pl-7 text-left">退出</button>
                    </div>
                    <div class="flex h-[19px] items-center gap-1.5 border-t border-b border-[#b9bcbe] bg-[#dfe3e4] pl-0.5"><svg class="h-1.5 w-3 text-[#444]" viewBox="0 0 12 6"><path d="M0 0h12L6 6z" fill="currentColor" /></svg>修改模式</div>
                    <div class="mx-px flex flex-col bg-white">
                        <button class="h-6 pl-7 text-left">单一</button>
                        <button class="h-6 bg-[#58595b] pl-7 text-left text-white">整体</button>
                        <hr class="mr-0.5 ml-6 border-[#e2e2e2]">
                        <button class="h-6 pl-7 text-left">半倍</button>
                        <button class="h-6 pl-7 text-left">双倍</button>
                        <button class="h-6 pl-7 text-left">值</button>
                    </div>
                </div>

                <!-- annotations and forum logo -->
                <svg class="pointer-events-none absolute inset-0 h-full w-full">
                    <g transform="translate(-288 -166)">
                        <g fill="#ff2212">
                            <path d="M978 845L1048 622L1044 621L1054 612L1057 626L1053 624z" />
                            <path d="M1205 572L1342 359L1338 358L1351 352L1349 366L1347 363z" />
                            <path d="M1133 886L1332 839L1329 836L1342 840L1332 849L1333 845z" />
                        </g>
                        <g fill="#f82a1c" font-size="21">
                            <text x="926" y="890">1双击线条</text>
                            <text x="1200" y="626">2选择菜单间距</text>
                            <text x="1142" y="931">3调整至合适密度</text>
                        </g>
                        <g font-size="38" font-style="italic" font-weight="300">
                            <text x="1416" y="929" fill="#ff6a30">野</text>
                            <text x="1459" y="929" fill="#ff6a30">火</text>
                            <text x="1504" y="929" fill="#000">论坛</text>
                        </g>
                        <path d="M1489 875c11 7 15 20 10 30-3 6-8 9-13 11 2-4 1-7 2-11 4-8 2-16-2-22 5 3 7 7 8 10 1-7-1-13-5-18z" fill="#ff6a30" />
                        <text x="1421" y="947" font-size="13" font-weight="bold" font-style="italic" fill="#8794a6" class="font-['DejaVu_Sans',sans-serif]">www.proewildfire.cn</text>
                    </g>
                </svg>
            </main>
        </div>
    </div>

    <script>
        // 45 degree hatch, one line every 26px
        const hatching = document.getElementById("hatching");
        for (let i = 0; i < 15; i++) {
            const k = 1474 + i * 26;
            const line = document.createElementNS("http://www.w3.org/2000/svg", "line");
            line.setAttribute("x1", k - 733);
            line.setAttribute("y1", 733);
            line.setAttribute("x2", k - 440);
            line.setAttribute("y2", 440);
            line.setAttribute("stroke-width", i > 10 ? 2 : 1);
            hatching.appendChild(line);
        }
    </script>
</body>

</html>
